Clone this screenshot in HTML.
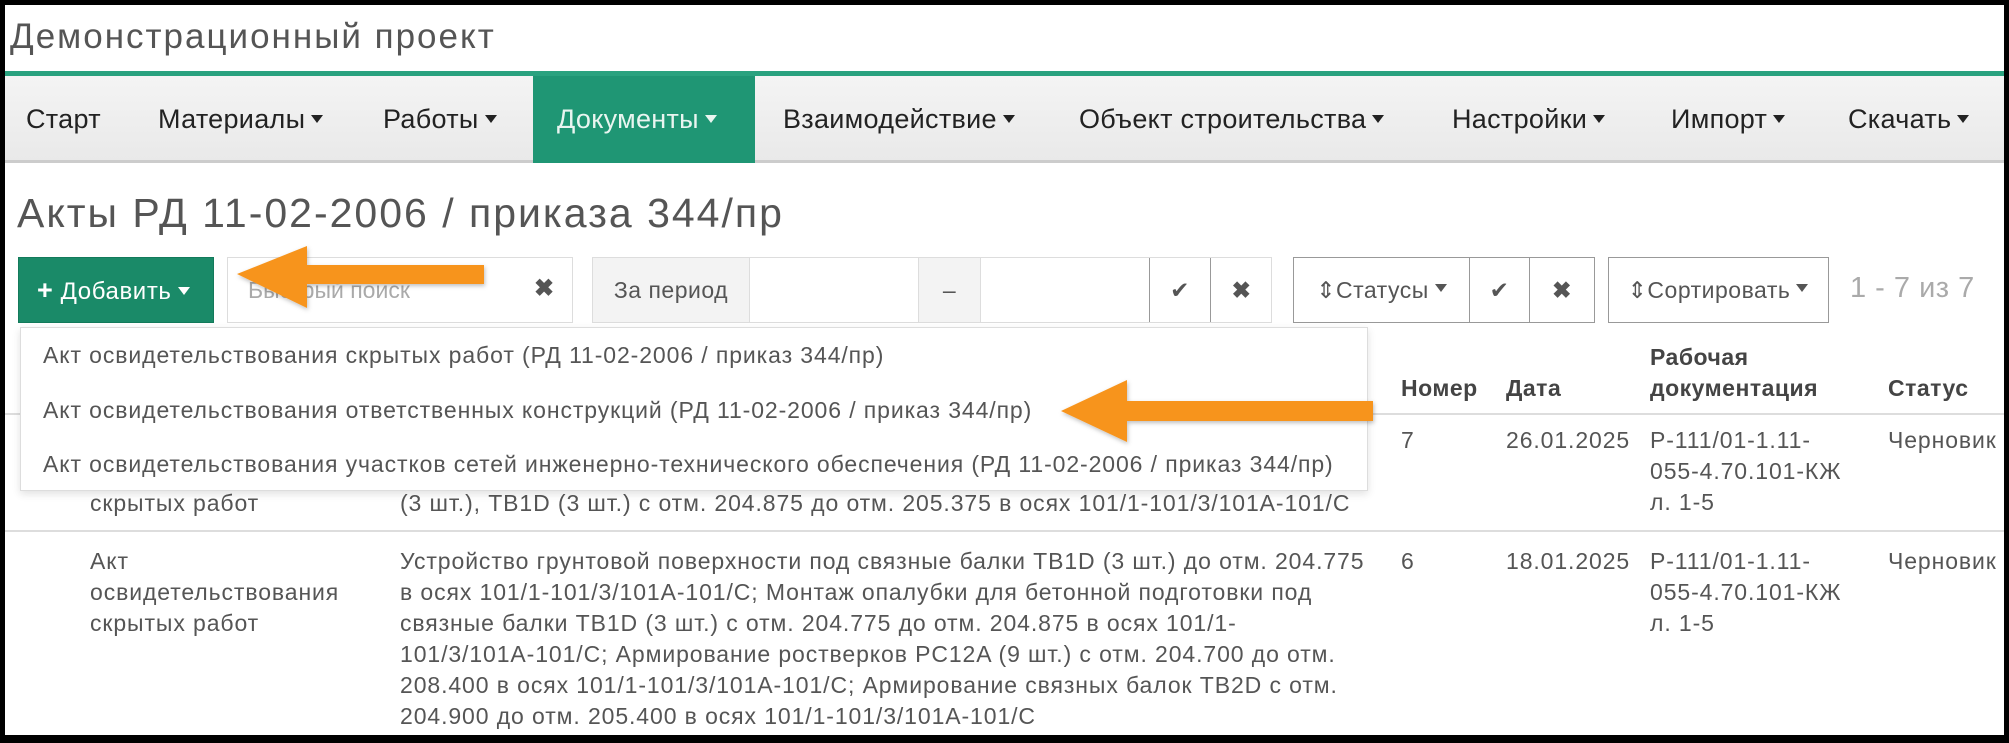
<!DOCTYPE html>
<html><head><meta charset="utf-8"><style>
*{margin:0;padding:0;box-sizing:border-box}
body{width:2009px;height:743px;overflow:hidden;background:#fff;font-family:"Liberation Sans",Arial,sans-serif;color:#555;position:relative}
.a{position:absolute;white-space:nowrap}
.frame{position:absolute;left:0;top:0;width:2009px;height:743px;border:5px solid #000;border-bottom-width:8px;z-index:50;pointer-events:none}
.nav{position:absolute;left:5px;top:76px;width:1999px;height:87px;background:linear-gradient(#f4f4f4,#e9e9e9);border-bottom:3px solid #ccc}
.nav span{position:absolute;top:28px;font-size:27px;letter-spacing:0.3px;color:#222}
.car{display:inline-block;width:0;height:0;border-left:6px solid transparent;border-right:6px solid transparent;border-top:8px solid currentColor;vertical-align:middle;margin-left:6px;position:relative;top:-2px}
.box{position:absolute;border:1.5px solid #999;background:#fff}
.cell{position:absolute;top:0;height:100%;border-left:1.5px solid #999;display:flex;align-items:center;justify-content:center;font-size:23px;letter-spacing:0.5px;color:#555}
.t{font-size:23px;letter-spacing:0.9px;color:#555;line-height:31px}
.h{font-size:23px;letter-spacing:0.5px;font-weight:bold;color:#444;line-height:31px}
.d{font-size:23px;letter-spacing:0.9px;color:#555}
</style></head><body>
<div class="frame"></div>
<div class="a" style="left:10px;top:17px;font-size:35px;letter-spacing:2px;color:#555">Демонстрационный проект</div>
<div class="a" style="left:5px;top:71px;width:1999px;height:5px;background:#2aa27f"></div>
<div class="nav">
<span style="left:21px">Старт</span>
<span style="left:153px">Материалы<i class="car"></i></span>
<span style="left:378px">Работы<i class="car"></i></span>
<div style="position:absolute;left:528px;top:0;width:222px;height:87px;background:#1f9674"></div>
<span style="left:552px;color:#e9f5f0">Документы<i class="car"></i></span>
<span style="left:778px">Взаимодействие<i class="car"></i></span>
<span style="left:1074px">Объект строительства<i class="car"></i></span>
<span style="left:1447px">Настройки<i class="car"></i></span>
<span style="left:1666px">Импорт<i class="car"></i></span>
<span style="left:1843px">Скачать<i class="car"></i></span>
</div>
<div class="a" style="left:17px;top:190px;font-size:41px;letter-spacing:2px;color:#555">Акты РД 11-02-2006 / приказа 344/пр</div>

<div class="a" style="left:18px;top:257px;width:196px;height:66px;background:#1a8a68;border:1px solid #137a5b;color:#fff;font-size:24px;letter-spacing:0.6px;line-height:64px;padding-left:18px"><b style="font-size:27px">+</b> Добавить<i class="car" style="color:#fff"></i></div>
<div class="box" style="left:227px;top:257px;width:346px;height:66px;border-color:#ddd"><span class="a" style="left:20px;top:19px;font-size:23px;color:#aaa">Быстрый поиск</span><span class="a" style="left:306px;top:16px;font-size:24px;color:#555;font-weight:bold">✖</span></div>
<div class="box" style="left:592px;top:257px;width:680px;height:66px;border-color:#ddd">
<div class="cell" style="left:0;width:156px;border:0;background:#f3f3f3">За период</div>
<div class="cell" style="left:156px;width:170px;border-color:#ddd"></div>
<div class="cell" style="left:325px;width:62px;border-color:#ddd;background:#f3f3f3">–</div>
<div class="cell" style="left:387px;width:169px;border-color:#ddd"></div>
<div class="cell" style="left:556px;width:61px;border-color:#999">✔</div>
<div class="cell" style="left:617px;width:62px;border-color:#999;font-weight:bold">✖</div>
</div>
<div class="box" style="left:1293px;top:257px;width:302px;height:66px">
<div class="cell" style="left:0;width:175px;border:0">⇕Статусы<i class="car"></i></div>
<div class="cell" style="left:175px;width:60px">✔</div>
<div class="cell" style="left:235px;width:65px;font-weight:bold">✖</div>
</div>
<div class="box" style="left:1608px;top:257px;width:221px;height:66px"><div class="cell" style="left:0;width:218px;border:0">⇕Сортировать<i class="car"></i></div></div>
<div class="a" style="left:1850px;top:272px;font-size:29px;letter-spacing:0.5px;color:#aaa">1 - 7 из 7</div>

<div class="a h" style="left:1650px;top:342px">Рабочая</div>
<div class="a h" style="left:1401px;top:373px">Номер</div>
<div class="a h" style="left:1506px;top:373px">Дата</div>
<div class="a h" style="left:1650px;top:373px">документация</div>
<div class="a h" style="left:1888px;top:373px">Статус</div>
<div class="a" style="left:5px;top:413px;width:1999px;height:2px;background:#ddd"></div>

<div class="a t" style="left:90px;top:488px">скрытых работ</div>
<div class="a t" style="left:400px;top:488px">(3 шт.), TB1D (3 шт.) с отм. 204.875 до отм. 205.375 в осях 101/1-101/3/101A-101/C</div>
<div class="a t" style="left:1401px;top:425px">7</div>
<div class="a t" style="left:1506px;top:425px">26.01.2025</div>
<div class="a t" style="left:1650px;top:425px">Р-111/01-1.11-<br>055-4.70.101-КЖ<br>л. 1-5</div>
<div class="a t" style="left:1888px;top:425px">Черновик</div>
<div class="a" style="left:5px;top:530px;width:1999px;height:2px;background:#ddd"></div>

<div class="a t" style="left:90px;top:546px">Акт<br>освидетельствования<br>скрытых работ</div>
<div class="a t" style="left:400px;top:546px">Устройство грунтовой поверхности под связные балки TB1D (3 шт.) до отм. 204.775<br>в осях 101/1-101/3/101A-101/C; Монтаж опалубки для бетонной подготовки под<br>связные балки TB1D (3 шт.) с отм. 204.775 до отм. 204.875 в осях 101/1-<br>101/3/101A-101/C; Армирование ростверков PC12A (9 шт.) с отм. 204.700 до отм.<br>208.400 в осях 101/1-101/3/101A-101/C; Армирование связных балок TB2D с отм.<br>204.900 до отм. 205.400 в осях 101/1-101/3/101A-101/C</div>
<div class="a t" style="left:1401px;top:546px">6</div>
<div class="a t" style="left:1506px;top:546px">18.01.2025</div>
<div class="a t" style="left:1650px;top:546px">Р-111/01-1.11-<br>055-4.70.101-КЖ<br>л. 1-5</div>
<div class="a t" style="left:1888px;top:546px">Черновик</div>

<div class="a" style="left:20px;top:327px;width:1348px;height:164px;background:#fff;border:1.5px solid #ddd;box-shadow:0 3px 8px rgba(0,0,0,.12);z-index:5">
<div class="a d" style="left:22px;top:14px">Акт освидетельствования скрытых работ (РД 11-02-2006 / приказ 344/пр)</div>
<div class="a d" style="left:22px;top:69px">Акт освидетельствования ответственных конструкций (РД 11-02-2006 / приказ 344/пр)</div>
<div class="a d" style="left:22px;top:123px">Акт освидетельствования участков сетей инженерно-технического обеспечения (РД 11-02-2006 / приказ 344/пр)</div>
</div>

<svg class="a" style="left:0;top:0;z-index:10" width="2009" height="743">
<defs><filter id="s"><feDropShadow dx="1" dy="2" stdDeviation="2" flood-opacity=".25"/></filter></defs>
<polygon filter="url(#s)" fill="#f7941d" points="237,274 307,246 307,265 484,265 484,284 307,284 307,308"/>
<polygon filter="url(#s)" fill="#f7941d" points="1061,411 1127,380 1127,401 1373,401 1373,421 1127,421 1127,442"/>
</svg>
</body></html>
